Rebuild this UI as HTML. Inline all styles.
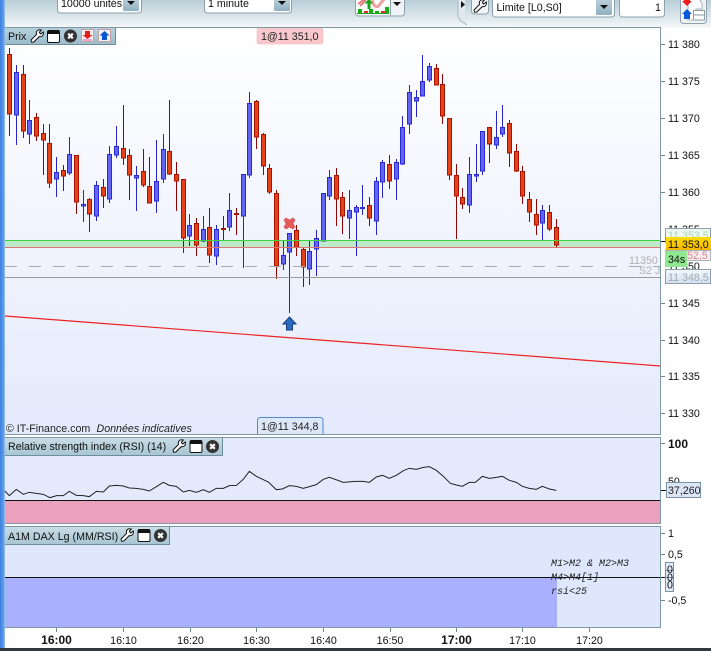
<!DOCTYPE html>
<html><head><meta charset="utf-8"><title>Chart</title>
<style>
html,body{margin:0;padding:0;background:#fff}
svg{display:block;font-family:"Liberation Sans",sans-serif;font-size:10.67px;fill:#111}
</style></head><body>
<svg width="711" height="651" viewBox="0 0 711 651" xmlns="http://www.w3.org/2000/svg">
<defs>
<linearGradient id="tb" x1="0" y1="0" x2="0" y2="1"><stop offset="0" stop-color="#b9ced8"/><stop offset=".5" stop-color="#d6e2e8"/><stop offset="1" stop-color="#f6f8fa"/></linearGradient>
<linearGradient id="ch" x1="0" y1="0" x2="0" y2="1"><stop offset="0" stop-color="#fff"/><stop offset="1" stop-color="#e4eafc"/></linearGradient>
<linearGradient id="hd" x1="0" y1="0" x2="0" y2="1"><stop offset="0" stop-color="#b4d0dc"/><stop offset="1" stop-color="#9cbccb"/></linearGradient>
<linearGradient id="hd2" x1="0" y1="0" x2="0" y2="1"><stop offset="0" stop-color="#c8dce6"/><stop offset="1" stop-color="#a8c6d2"/></linearGradient>
<linearGradient id="cb" x1="0" y1="0" x2="0" y2="1"><stop offset="0" stop-color="#c0d4de"/><stop offset="1" stop-color="#8fb0c2"/></linearGradient>
<linearGradient id="gold" x1="0" y1="0" x2="0" y2="1"><stop offset="0" stop-color="#ffdc00"/><stop offset="1" stop-color="#f4b400"/></linearGradient>
<linearGradient id="lb" x1="0" y1="0" x2="0" y2="1"><stop offset="0" stop-color="#f4f7fc"/><stop offset="1" stop-color="#d4e0f2"/></linearGradient>
<linearGradient id="strip" x1="0" y1="0" x2="1" y2="0"><stop offset="0" stop-color="#3d7fe0"/><stop offset="1" stop-color="#6aa8ee"/></linearGradient>
<path id="wr" d="M8.5.8 11.3 1 9.3 3.3 10.7 5 13.3 3C14 6 12 8.200 9.200 7.600L3.800 13 1.600 13.200 1 11 6.500 5.500C6 3.200 6.800 1.500 8.500.8Z" fill="#fff" stroke="#111" stroke-width="1"/>
<g id="wn"><rect x=".5" y=".5" width="12" height="12" rx="1.500" fill="#fff" stroke="#111"/><rect x="1" y="1" width="11" height="3" fill="#111"/></g>
<g id="cl"><circle cx="6.500" cy="6.500" r="6.500" fill="#333"/><path d="M4.200 4.200 8.800 8.800M8.800 4.200 4.200 8.800" stroke="#fff" stroke-width="2.200"/></g>
<path id="ca" d="M0 0H8L4 4Z" fill="#111"/>
</defs>

<!-- toolbar -->
<rect width="711" height="28" fill="url(#tb)"/>
<rect x="0" y="0" width="5" height="648" fill="url(#strip)"/>
<rect x="4" y="0" width="1" height="648" fill="#8cb8ea"/>

<rect x="57.500" y="-6" width="84" height="19" rx="3" fill="#fff" stroke="#8da2ad"/>
<rect x="123" y="-2" width="16" height="13" rx="1.500" fill="url(#cb)"/><use href="#ca" x="127" y="1"/>
<text x="61" y="7">10000 unités</text>
<rect x="204.500" y="-6" width="87" height="19" rx="3" fill="#fff" stroke="#8da2ad"/>
<rect x="274" y="-2" width="16" height="13" rx="1.500" fill="url(#cb)"/><use href="#ca" x="278" y="1"/>
<text x="208" y="7">1 minute</text>

<!-- chart type button -->
<rect x="355.500" y="-6" width="49" height="22" rx="3" fill="#eef3f6" stroke="#8da2ad"/>
<rect x="356.500" y="-5" width="34" height="20" fill="#fff"/>
<path d="M390.500 0V16" stroke="#8da2ad"/>
<path d="M358 4 366 -2M360 6 366 0" stroke="#e08080" stroke-width="2" fill="none"/>
<path d="M372 0C374 8 378 8 380 4L386 -3" stroke="#f0a0a0" stroke-width="3" fill="none"/>
<path d="M369 0 364 -3" stroke="#9ce09c" stroke-width="3"/>
<path d="M364.500 3.500 369 -1 373 3.500H370.500V9H367.500V3.500Z" fill="#13a813"/>
<path d="M357 13h32v1h-32z" fill="#1fa01f"/>
<path d="M358 9h4v4h-4zM364 11h4v2h-4zM369 9h4v4h-4zM375 11h4v2h-4zM381 11h4v2h-4zM385 7h4v6h-4z" fill="#12b012"/>
<path d="M364 11h4v2h-4zM381 11h4v2h-4z" fill="#d93030"/>
<use href="#ca" x="393" y="2"/>

<!-- side tab -->
<path d="M458 0H465V18L467 25 460 20 458 17Z" fill="#dfe9ee"/><path d="M458 0V17L461 21 467 25" stroke="#a4b8c2" fill="none"/>
<path d="M461 1 465 4.500 461 8Z" fill="#111"/>

<rect x="471.500" y="-6" width="17" height="20" rx="3" fill="#f2f5f7" stroke="#8da2ad"/>
<use href="#wr" x="473" y="-1"/>
<rect x="492.500" y="-6" width="122" height="23" rx="3" fill="#fff" stroke="#8da2ad"/>
<rect x="596" y="-2" width="16" height="17" rx="1.500" fill="url(#cb)"/><use href="#ca" x="600" y="5"/>
<text x="496.500" y="11">Limite [L0,S0]</text>
<rect x="619.500" y="-6" width="45" height="23" rx="3" fill="#fff" stroke="#8da2ad"/>
<text x="655" y="11">1</text>
<rect x="680.500" y="-6" width="26" height="29.500" rx="3" fill="#eef2f5" stroke="#8da2ad"/>
<path d="M688 -2H698L702 3V9H696V20H688Z" fill="#fff" stroke="#a8b4bc"/>
<path d="M684 0H690V1H692L687 6 682 1H684Z" fill="#ee1c1c"/>
<path d="M687 9 692 14H690V19H684V14H682Z" fill="#0a5ad8"/>
<rect x="693.500" y="10.500" width="11" height="9.500" fill="#fff" stroke="#8c9aa2"/><path d="M694 15h10" stroke="#8c9aa2"/>

<!-- panels -->
<rect x="5" y="28" width="655.500" height="406.500" fill="url(#ch)"/>
<rect x="5" y="438" width="655.500" height="85" fill="#e4eafc"/>
<rect x="5" y="527" width="655.500" height="100" fill="#dfe7fc"/>

<!-- level band -->
<rect x="5" y="241" width="655" height="6" fill="#bdeac8"/>

<!-- candles wicks -->
<path fill="none" stroke="#8c0606" d="M9.500 48V136M23.500 65V138M36.500 113V141M43.500 124V175M49.500 124V188M63.500 165V191M76.500 155V214M89.500 198V232M103.500 179V208M123.500 105V165M129.500 149V200M143.500 149V187M149.500 157V203M169.500 100V175M176.500 162V211M183.500 179V253M196.500 218V256M209.500 208V263M223.500 216V240M236.500 208V235M256.500 100V149M263.500 133V175M269.500 164V194M276.500 190V279M296.500 225V256M303.500 248V287M336.500 168V226M342.500 192V234M369.500 197V226M389.500 155V189M436.500 64V85M442.500 74V124M449.500 118V180M456.500 164V239M462.500 188V209M489.500 127V163M509.500 120V167M516.500 144V172M522.500 166V204M529.500 192V222M536.500 199V235M549.500 205V231M556.500 219V247"/>
<path fill="none" stroke="#2424c8" d="M16.500 65V145M29.500 100V144M56.500 157V197M69.500 137V175M83.500 190V222M96.500 181V221M109.500 146V203M116.500 126V158M136.500 166V211M156.500 140V213M163.500 134V183M189.500 214V246M203.500 216V242M216.500 225V265M229.500 193V231M243.500 174V268M249.500 92V178M283.500 241V270M289.500 233V313M309.500 241V285M316.500 230V276M323.500 193V241M329.500 170V200M349.500 190V239M356.500 205V256M362.500 185V215M376.500 177V235M382.500 160V198M396.500 159V200M402.500 116V165M409.500 85V134M416.500 90V117M422.500 55V96M429.500 63V82M469.500 157V213M476.500 144V182M482.500 131V175M496.500 111V149M502.500 105V137M542.500 205V240"/>
<!-- candles bodies -->
<path fill="#e4421a" stroke="#a61400" d="M7.500 54.500h4V114h-4zM21.500 74.500h4V131h-4zM34.500 117.500h4V136h-4zM41.500 133.500h4V140h-4zM47.500 143.500h4V183h-4zM61.500 170.500h4V176h-4zM74.500 155.500h4V202h-4zM87.500 199.500h4V214h-4zM101.500 187.500h4V196h-4zM121.500 148.500h4V158h-4zM127.500 155.500h4V175h-4zM141.500 171.500h4V185h-4zM147.500 186.500h4V203h-4zM167.500 151.500h4V174h-4zM174.500 174.500h4V181h-4zM181.500 179.500h4V238h-4zM194.500 223.500h4V245h-4zM207.500 227.500h4V255h-4zM221.500 228.500h4V229.500h-4zM234.500 213.500h4V214.500h-4zM254.500 101.500h4V137h-4zM261.500 134.500h4V166h-4zM267.500 168.500h4V192h-4zM274.500 193.500h4V266h-4zM294.500 230.500h4V247h-4zM301.500 249.500h4V267h-4zM334.500 175.500h4V199h-4zM340.500 197.500h4V216h-4zM367.500 205.500h4V218h-4zM387.500 164.500h4V181h-4zM434.500 68.500h4V85h-4zM440.500 84.500h4V116h-4zM447.500 118.500h4V175h-4zM454.500 175.500h4V196h-4zM460.500 197.500h4V204h-4zM487.500 127.500h4V144h-4zM507.500 123.500h4V153h-4zM514.500 151.500h4V171h-4zM520.500 171.500h4V196h-4zM527.500 199.500h4V212h-4zM534.500 214.500h4V225h-4zM547.500 212.500h4V229h-4zM554.500 227.500h4V245h-4z"/>
<path fill="#6464f2" stroke="#2a2ad0" d="M14.500 72.500h4V115h-4zM27.500 120.500h4V134h-4zM54.500 172.500h4V179h-4zM67.500 154.500h4V173h-4zM81.500 204.500h4V206h-4zM94.500 185.500h4V216h-4zM107.500 154.500h4V199h-4zM114.500 146.500h4V155h-4zM134.500 175.500h4V178h-4zM154.500 181.500h4V201h-4zM161.500 149.500h4V179h-4zM187.500 225.500h4V236h-4zM201.500 229.500h4V241h-4zM214.500 229.500h4V256h-4zM227.500 210.500h4V227h-4zM241.500 174.500h4V216h-4zM247.500 103.500h4V175h-4zM281.500 255.500h4V264h-4zM287.500 233.500h4V252h-4zM307.500 251.500h4V269h-4zM314.500 238.500h4V249h-4zM321.500 193.500h4V241h-4zM327.500 177.500h4V196h-4zM347.500 210.500h4V218h-4zM354.500 207.500h4V212h-4zM360.500 207.500h4V208.500h-4zM374.500 181.500h4V221h-4zM380.500 162.500h4V182h-4zM394.500 162.500h4V179h-4zM400.500 127.500h4V164h-4zM407.500 92.500h4V124h-4zM414.500 97.500h4V101h-4zM420.500 81.500h4V96h-4zM427.500 66.500h4V80h-4zM467.500 174.500h4V205h-4zM474.500 174.500h4V176h-4zM480.500 131.500h4V171h-4zM494.500 137.500h4V145h-4zM500.500 127.500h4V134h-4zM540.500 210.500h4V223h-4z"/>

<!-- level lines -->
<path d="M5 240.500H660" stroke="#3fd03f"/>
<path d="M5 247.500H660" stroke="#e07474"/>
<path d="M5 266.500H660" stroke="#aaaaaa" stroke-dasharray="12 12"/>
<path d="M5 277.500H660" stroke="#9a9a9a"/>
<path d="M5 316 660.500 366" stroke="#ee2222" stroke-width="1.200"/>

<!-- markers -->
<path d="M286 218 289.500 220 293 218 295 220 293 223.500 295 227 293 229 289.500 227 286 229 284 227 286 223.500 284 220Z" fill="#e85a5a" stroke="#c84040" stroke-dasharray="1 1"/>
<path d="M289.500 317 296 324H292.500V330H286.500V324H283Z" fill="#2a6cc0" stroke="#123e80"/>

<!-- labels in chart -->
<rect x="257" y="28" width="66" height="16" rx="2" fill="#f9c8cc" stroke="#f4b8c0" stroke-width=".6"/>
<text x="261" y="40" fill="#222">1@11 351,0</text>
<path d="M257.500 434V420.500Q257.500 417.500 260.500 417.500H320Q323 417.500 323 420.500V434" fill="#dde7f8" stroke="#4f8ad0"/>
<text x="261" y="430" fill="#222">1@11 344,8</text>
<text x="6" y="432" fill="#222">© IT-Finance.com</text>
<text x="96.500" y="432" font-style="italic" fill="#222">Données indicatives</text>

<!-- prix header -->
<rect x="5" y="28" width="110" height="16" fill="url(#hd)"/>
<path d="M5 44.500H115.500V28" fill="none" stroke="#6e8e9e"/>
<text x="8" y="40">Prix</text>
<use href="#wr" x="30" y="29"/><use href="#wn" x="47" y="30"/><use href="#cl" x="64" y="29.500"/>
<rect x="81.500" y="29.500" width="12" height="12" fill="#f8ecec" stroke="#c8a0a0"/><path d="M85 31H90V35H92.500L87.500 39 82.500 35H85Z" fill="#e02020"/><path d="M83 40h9" stroke="#e060c0"/>
<rect x="98.500" y="29.500" width="12" height="12" fill="#eef2fa" stroke="#c8a0a0"/><path d="M104.500 31 109.500 35.500H107V40H102V35.500H99.500Z" fill="#0a56d0"/>

<!-- panel RSI -->
<rect x="5" y="501" width="655.500" height="22" fill="#eba0bd"/>
<path d="M5 500.500H660" stroke="#111"/>
<g fill="none" stroke="#222" stroke-width="1">
<polyline transform="translate(0 410) scale(.33333)" stroke-width="3" points="15,243 28,257 49,238 70,253 88,247 109,250 130,253 150,263 170,257 190,257 208,244 229,256 250,257 268,260 289,244 310,246 328,228 349,226 370,228 388,234 409,235 430,238 448,243 469,230 490,217 508,226 529,229 550,246 568,241 589,247 610,239 628,247 649,235 670,235 688,227 709,226 730,208 748,184 769,199 805,216 829,239 847,237 868,227 889,229 910,235 949,224 970,208 988,202 1030,217 1065,214"/>
<polyline transform="translate(355 410) scale(.33333)" stroke-width="3" points="0,214 25,214 43,217 64,201 82,196 103,205 124,196 145,182 163,175 184,178 205,172 223,170 244,181 265,199 286,220 304,225 322,229 343,217 361,217 382,199 403,205 424,202 442,199 463,211 484,217 502,229 523,235 544,238 562,229 583,237 604,241"/>
</g>
<rect x="5" y="438" width="218" height="17" fill="url(#hd2)"/>
<path d="M5 455.500H222.500V438" fill="none" stroke="#6e8e9e"/>
<text x="8" y="450">Relative strength index (RSI) (14)</text>
<use href="#wr" x="172" y="439"/><use href="#wn" x="189.500" y="440"/><use href="#cl" x="206" y="440"/>

<!-- panel 3 -->
<rect x="5" y="578" width="552" height="49" fill="#a8b0ff"/>
<path d="M5 577.500H660" stroke="#111"/>
<rect x="5" y="527" width="165" height="17" fill="url(#hd2)"/>
<path d="M5 544.500H169.500V527" fill="none" stroke="#6e8e9e"/>
<text x="8" y="540">A1M DAX Lg (MM/RSI)</text>
<use href="#wr" x="120" y="528"/><use href="#wn" x="137.500" y="529"/><use href="#cl" x="154" y="529"/>
<g font-family="'Liberation Mono',monospace" font-size="10px" font-style="italic" fill="#222">
<text x="551" y="566">M1&gt;M2 &amp; M2&gt;M3</text>
<text x="551" y="580">M4&gt;M4[1]</text>
<text x="551" y="594">rsi&lt;25</text>
</g>

<!-- panel frames -->
<g fill="none" stroke="#7f98a6">
<path d="M5 27.500H660.500V434.500H5"/>
<path d="M5 437.500H660.500V523.500H5"/>
<path d="M5 526.500H660.500V627.500H5"/>
</g>

<!-- y axis ticks -->
<path stroke="#6e8796" d="M661 44.500h4M661 81.500h4M661 118.500h4M661 155.500h4M661 192.500h4M661 303.500h4M661 340.500h4M661 376.500h4M661 413.500h4M661 443.500h4M661 533.500h4M661 554.500h4M661 600.500h4"/>
<path stroke="#111" d="M661 241.500h5M661 490.500h5M661 577.500h5"/>
<g fill="#111">
<text x="668" y="48">11 380</text><text x="668" y="85">11 375</text><text x="668" y="122">11 370</text>
<text x="668" y="159">11 365</text><text x="668" y="196">11 360</text><text x="668" y="233">11 355</text>
<text x="668" y="270">11 350</text><text x="668" y="307">11 345</text><text x="668" y="344">11 340</text>
<text x="668" y="380">11 335</text><text x="668" y="417">11 330</text>
<text x="668" y="448" font-weight="bold" font-size="12px">100</text>
<text x="668" y="485">50</text>
<text x="668" y="537">1</text><text x="668" y="558">0,5</text><text x="668" y="604">-0,5</text>
</g>

<!-- right labels -->
<text x="629" y="264" fill="#b0b0b0">11350</text>
<text x="639" y="274" fill="#b0b0b0">S2 J</text>
<rect x="665.500" y="228.500" width="45" height="14" fill="#eef6f2" stroke="#8aa0ac"/>
<text x="668" y="239" fill="#a8d8b0">11 353,5</text>
<rect x="666" y="237" width="45" height="14" fill="url(#gold)"/>
<text x="668" y="248" fill="#111">11 353,0</text>
<rect x="665.500" y="250.500" width="45" height="10" fill="#f6eef0" stroke="#a8b4bc"/>
<text x="687" y="259" fill="#e08090">52,5</text>
<rect x="665" y="251" width="22" height="16" fill="#90e890"/>
<text x="668" y="263" fill="#111">34s</text>
<rect x="665.500" y="269.500" width="45" height="14" fill="url(#lb)" stroke="#8aa0ac"/>
<text x="668" y="281" fill="#a0a8b0">11 348,5</text>
<rect x="666.500" y="482.500" width="34" height="15" fill="#dce5f5" stroke="#7a92a0"/>
<text x="668" y="494" fill="#222">37,260</text>
<g fill="#e2eafa" stroke="#7a92a0">
<rect x="665.500" y="562.500" width="8" height="14"/><rect x="665.500" y="570.500" width="8" height="14"/><rect x="665.500" y="577.500" width="8" height="14"/>
</g>
<text x="667" y="573">0</text><text x="667" y="581">0</text><text x="667" y="588.500">0</text>

<!-- time axis -->
<path stroke="#6e8796" d="M56.500 628v4M123.500 628v4M190.500 628v4M256.500 628v4M323.500 628v4M390.500 628v4M456.500 628v4M522.500 628v4M589.500 628v4"/>
<g text-anchor="middle" fill="#111">
<text x="56.500" y="644" font-weight="bold" font-size="12px">16:00</text>
<text x="123.500" y="644">16:10</text><text x="190.500" y="644">16:20</text><text x="256.500" y="644">16:30</text>
<text x="323.500" y="644">16:40</text><text x="390" y="644">16:50</text>
<text x="456.500" y="644" font-weight="bold" font-size="12px">17:00</text>
<text x="522.500" y="644">17:10</text><text x="589.500" y="644">17:20</text>
</g>
<rect x="0" y="648" width="711" height="3" fill="#333a3e"/>
</svg>
</body></html>
